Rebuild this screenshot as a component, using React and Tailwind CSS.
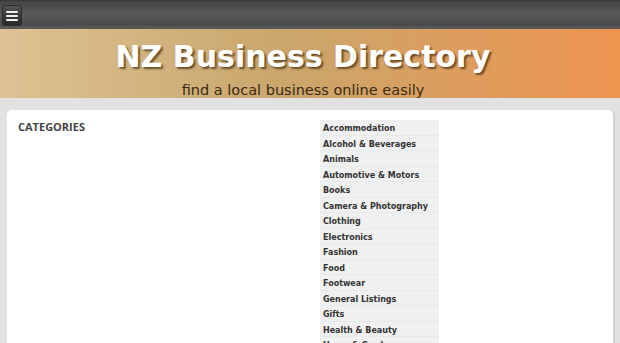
import React from "react";

const categories = [
  "Accommodation",
  "Alcohol & Beverages",
  "Animals",
  "Automotive & Motors",
  "Books",
  "Camera & Photography",
  "Clothing",
  "Electronics",
  "Fashion",
  "Food",
  "Footwear",
  "General Listings",
  "Gifts",
  "Health & Beauty",
  "Home & Garden",
  "Jewellery",
];

const MenuButton = () => (
  <button className="ml-[2px] mt-[4px] w-[20px] h-[21px] rounded-[3px] bg-gradient-to-b from-[#555] via-[#3a3a3a] to-[#2a2a2a] border border-[#2a2a2a] flex flex-col items-center justify-center gap-[2px]">
    <span className="block w-[12px] h-[2px] bg-[#eee] rounded-sm" />
    <span className="block w-[12px] h-[2px] bg-[#eee] rounded-sm" />
    <span className="block w-[12px] h-[2px] bg-[#eee] rounded-sm" />
  </button>
);

const App = () => {
  return (
    <div className="w-[620px] h-[343px] overflow-hidden bg-[#e2e2e2] font-['DejaVu_Sans',sans-serif]">
      {/* toolbar */}
      <div className="h-[29px] bg-gradient-to-b from-[#444] via-[#5a5a5a] to-[#4a4a4a] border-t border-[#3a3a3a] border-b-[3px] border-b-[#575757]">
        <MenuButton />
      </div>

      {/* banner */}
      <div className="h-[69px] bg-gradient-to-r from-[#ddc394] via-[#c9a66c] via-45% to-[#ee9450] flex flex-col items-center pt-[9px] pr-[14px]">
        <h1 className="text-[30px] leading-[38px] font-bold text-white [text-shadow:2px_2px_2px_rgba(60,40,10,0.7)]">
          NZ Business Directory
        </h1>
        <p className="text-[14.5px] leading-[18px] text-[#3b2a12] mt-[5px]">
          find a local business online easily
        </p>
      </div>

      {/* content */}
      <div className="pl-[7px] pr-[5px] pt-[12px]">
        <div className="bg-white rounded-t-[5px] h-[240px] flex pt-[10px] pl-[11px] border-r-2 border-[#d0d0d0]">
          <div className="w-[302px]">
            <h2 className="text-[11px] font-bold text-[#444] font-['Open_Sans',sans-serif] mt-[-1px]">
              CATEGORIES
            </h2>
          </div>
          <ul className="w-[119px]">
            {categories.map((c) => (
              <li
                key={c}
                className="h-[15.5px] bg-[#f0f0f0] border-b border-[#e4ebef] pl-[3px] pt-[2px] text-[8px] font-bold leading-[13px] text-[#333]"
              >
                {c}
              </li>
            ))}
          </ul>
        </div>
      </div>
    </div>
  );
};

export default App;
